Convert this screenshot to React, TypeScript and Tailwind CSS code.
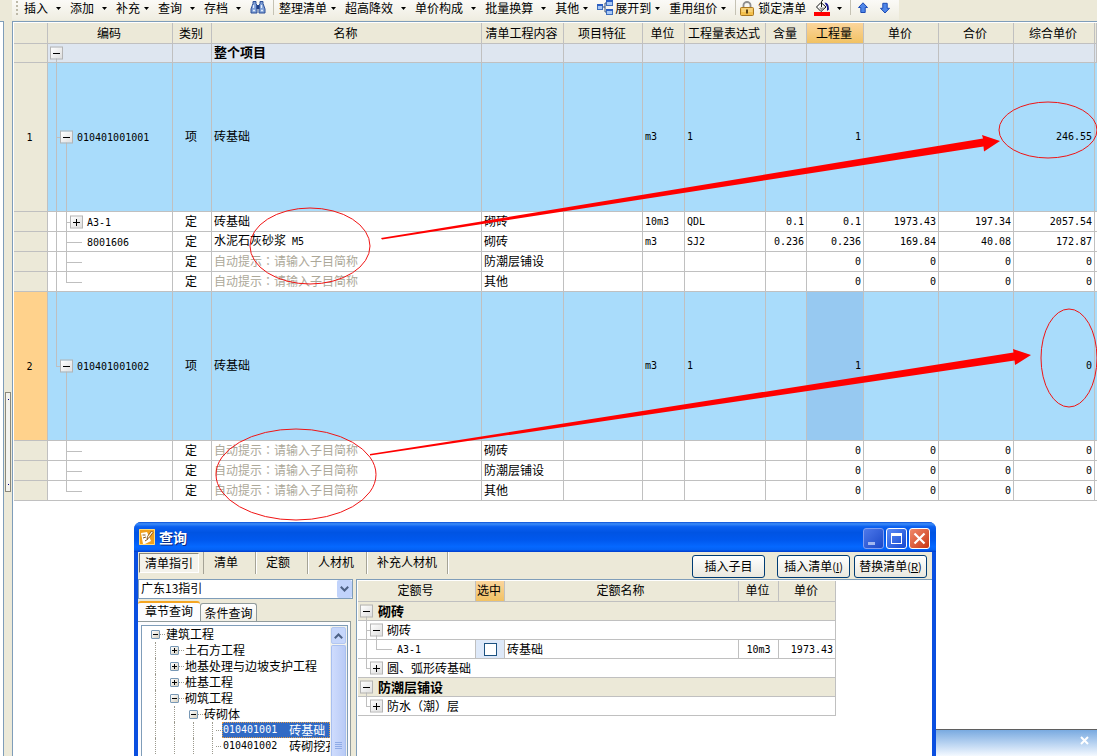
import { Fragment } from 'react';
import type { ReactNode } from 'react';
import clsx from 'clsx';

type GridRow = {
  no?: string;
  code?: string;
  kind: string;
  name?: string;
  content?: string;
  unit?: string;
  expr?: string;
  rate?: string;
  qty: string;
  price?: string;
  total?: string;
  full: string;
  item?: boolean;
  selected?: boolean;
  last?: boolean;
  toggle?: 'plus' | 'minus';
  lastItem?: boolean;
};

const HINT = '自动提示：请输入子目简称';

const rows: GridRow[] = [
  { no: '1', code: '010401001001', kind: '项', name: '砖基础', unit: 'm3', expr: '1', qty: '1', full: '246.55', item: true, toggle: 'minus' },
  { code: 'A3-1', kind: '定', name: '砖基础', content: '砌砖', unit: '10m3', expr: 'QDL', rate: '0.1', qty: '0.1', price: '1973.43', total: '197.34', full: '2057.54', toggle: 'plus' },
  { code: '8001606', kind: '定', name: '水泥石灰砂浆 M5', content: '砌砖', unit: 'm3', expr: 'SJ2', rate: '0.236', qty: '0.236', price: '169.84', total: '40.08', full: '172.87' },
  { kind: '定', content: '防潮层铺设', qty: '0', price: '0', total: '0', full: '0' },
  { kind: '定', content: '其他', qty: '0', price: '0', total: '0', full: '0', last: true },
  { no: '2', code: '010401001002', kind: '项', name: '砖基础', unit: 'm3', expr: '1', qty: '1', full: '0', item: true, selected: true, lastItem: true, toggle: 'minus' },
  { kind: '定', content: '砌砖', qty: '0', price: '0', total: '0', full: '0', lastItem: true },
  { kind: '定', content: '防潮层铺设', qty: '0', price: '0', total: '0', full: '0', lastItem: true },
  { kind: '定', content: '其他', qty: '0', price: '0', total: '0', full: '0', last: true, lastItem: true },
];

const columns = ['', '编码', '类别', '名称', '清单工程内容', '项目特征', '单位', '工程量表达式', '含量', '工程量', '单价', '合价', '综合单价', ''];

const menus = [
  { label: '插入', wide: true },
  { label: '添加', wide: true },
  { label: '补充', wide: false },
  { label: '查询', wide: true },
  { label: '存档', wide: true },
];

const actions = [
  { label: '整理清单', wide: false },
  { label: '超高降效', wide: true },
  { label: '单价构成', wide: true },
  { label: '批量换算', wide: true },
  { label: '其他', wide: false },
];

const tree = [
  { level: 0, label: '建筑工程', open: true },
  { level: 1, label: '土石方工程', open: false },
  { level: 1, label: '地基处理与边坡支护工程', open: false },
  { level: 1, label: '桩基工程', open: false },
  { level: 1, label: '砌筑工程', open: true },
  { level: 2, label: '砖砌体', open: true },
  { level: 3, code: '010401001', label: '砖基础', selected: true },
  { level: 3, code: '010401002', label: '砖砌挖孔' },
];

// Latin runs are set in the narrow mono face, Chinese in the UI face,
// full-width punctuation in the TC face so that it sits mid-cell
function Text({ value }: { value?: string }) {
  if (!value) return null;
  return (
    <>
      {value.split(/( ?[\x21-\x7e]+|[：（）])/).map((part, i) => {
        if (i % 2 === 0) return <Fragment key={i}>{part}</Fragment>;
        return /[：（）]/.test(part) ? (
          <span key={i} lang="zh-TW" className="font-['Noto_Sans_CJK_TC',sans-serif]">{part}</span>
        ) : (
          <span key={i} className="font-['DejaVu_Sans_Mono',monospace] text-[10px]">{part}</span>
        );
      })}
    </>
  );
}

function Caret() {
  return (
    <svg width="5" height="3" viewBox="0 0 5 3" className="shrink-0">
      <path d="M0 0h5L2.500 3z" fill="#000" />
    </svg>
  );
}

function MenuButton({ label, wide }: { label: string; wide: boolean }) {
  return (
    <button className={clsx('flex items-center shrink-0 h-4 pr-[9px] whitespace-nowrap', wide ? 'gap-2' : 'gap-1')}>
      {label}
      <Caret />
    </button>
  );
}

function Separator() {
  return <span className="w-px h-[15px] bg-[#c5c2b4] shrink-0" />;
}

function Toggle({ kind, className }: { kind: 'plus' | 'minus'; className: string }) {
  return (
    <button
      aria-label={kind === 'plus' ? '展开' : '折叠'}
      className={clsx('absolute top-1/2 -translate-y-1/2 size-[13px] border border-[#b4b4b4] bg-linear-to-br from-white to-[#dedede]', className)}
    >
      <svg width="11" height="11" viewBox="0 0 11 11" className="block" shapeRendering="crispEdges">
        <path d={kind === 'plus' ? 'M2 5h7v1H2zM5 2h1v7H5z' : 'M2 5h7v1H2z'} fill="#000" />
      </svg>
    </button>
  );
}

function CodeCell({ row }: { row: GridRow }) {
  const line = 'absolute bg-[#bfbfbf]';
  return (
    <td className={clsx('relative border-r border-b border-[#c0c0c0]', row.item ? 'pl-[29px]' : 'pl-[39px]')}>
      {row.item ? (
        <>
          <span className={clsx(line, 'left-2 top-0 w-px', row.lastItem ? 'h-1/2' : 'h-full')} />
          <span className={clsx(line, 'left-2 top-1/2 w-1 h-px')} />
          <span className={clsx(line, 'left-[18px] top-1/2 bottom-0 w-px')} />
          <Toggle kind="minus" className="left-3" />
        </>
      ) : (
        <>
          {!row.lastItem && <span className={clsx(line, 'left-2 top-0 w-px h-full')} />}
          <span className={clsx(line, 'left-[18px] top-0 w-px', row.last ? 'h-1/2' : 'h-full')} />
          <span className={clsx(line, 'left-[18px] top-1/2 w-4 h-px')} />
          {row.toggle && <Toggle kind={row.toggle} className="left-[22px]" />}
        </>
      )}
      <Text value={row.code} />
    </td>
  );
}

function QuotaGrid() {
  const line = 'border-r border-b border-[#c0c0c0]';
  const cell = clsx(line, 'pb-0.5');
  return (
    <table className="w-full table-fixed border-separate border-spacing-0 leading-[14px] whitespace-nowrap">
      <colgroup>
        <col className="w-[34px]" />
        <col className="w-[125px]" />
        <col className="w-[39px]" />
        <col />
        <col className="w-[82px]" />
        <col className="w-[79px]" />
        <col className="w-[42px]" />
        <col className="w-[81px]" />
        <col className="w-[41px]" />
        <col className="w-[57px]" />
        <col className="w-[75px]" />
        <col className="w-[75px]" />
        <col className="w-[81px]" />
        <col className="w-[2px]" />
      </colgroup>
      <thead>
        <tr className="h-[21px] bg-[#ece9d8]">
          {columns.map((c, i) => (
            <th key={i} className={clsx(line, 'pr-0.5 font-normal', c === '工程量' && 'bg-linear-to-b from-[#fbd59b] to-[#f1c263]')}>
              {c}
            </th>
          ))}
        </tr>
      </thead>
      <tbody>
        <tr className="h-[19px] bg-[#dee6f0]">
          <td className={clsx(cell, 'bg-[#ece9d8]')} />
          <td className={clsx(line, 'relative')}>
            <span className="absolute left-2 top-1/2 bottom-0 w-px bg-[#bfbfbf]" />
            <Toggle kind="minus" className="left-0.5" />
          </td>
          <td className={cell} />
          <td className={clsx(cell, 'pl-0.5 text-[13px] font-bold')}>整个项目</td>
          {columns.slice(4).map((_, i) => (
            <td key={i} className={cell} />
          ))}
        </tr>
        {rows.map((row, i) => (
          <tr key={i} className={row.item ? 'h-[149px] bg-[#a9dcfb]' : 'h-5 bg-white'}>
            <td className={clsx(line, 'pr-0.5 text-center', row.selected ? 'bg-[#ffd28c]' : 'bg-[#ece9d8]')}>
              <Text value={row.no} />
            </td>
            <CodeCell row={row} />
            <td className={clsx(cell, 'pr-0.5 text-center')}>{row.kind}</td>
            <td className={clsx(cell, 'pl-0.5', !row.name && 'text-[#aca899]')}>
              <Text value={row.name ?? HINT} />
            </td>
            <td className={clsx(cell, 'pl-0.5')}>{row.content}</td>
            <td className={cell} />
            <td className={clsx(cell, 'pl-0.5')}><Text value={row.unit} /></td>
            <td className={clsx(cell, 'pl-0.5')}><Text value={row.expr} /></td>
            <td className={clsx(cell, 'pr-0.5 text-right')}><Text value={row.rate} /></td>
            <td className={clsx(cell, 'pr-0.5 text-right', row.selected && 'bg-[#97c9f1]')}><Text value={row.qty} /></td>
            <td className={clsx(cell, 'pr-0.5 text-right')}><Text value={row.price} /></td>
            <td className={clsx(cell, 'pr-0.5 text-right')}><Text value={row.total} /></td>
            <td className={clsx(cell, 'pr-0.5 text-right')}><Text value={row.full} /></td>
            <td className="border-b border-[#c0c0c0]" />
          </tr>
        ))}
      </tbody>
    </table>
  );
}

function Toolbar() {
  return (
    <div className="h-[21px] flex bg-[#ece9d8]">
      <div className="h-5 ml-3 pl-1 pr-2 flex items-start bg-linear-to-b from-[#fbfaf7] to-[#efede1] leading-4">
        <svg width="2" height="15" viewBox="0 0 2 15" className="mr-1.5 shrink-0">
          <path d="M0 1h2v2H0zM0 5h2v2H0zM0 9h2v2H0zM0 13h2v2H0z" fill="#bdb9a8" />
        </svg>
        {menus.map((m) => <MenuButton key={m.label} {...m} />)}
        <button aria-label="查找" className="w-4 h-4 mr-[7px] shrink-0">
          <svg width="16" height="16" viewBox="0 0 16 16">
            <path d="M3 1.500h3v2l1 2v7.500H1V9l2-5.500z" fill="#7f9fd6" stroke="#2c4f96" />
            <path d="M10 1.500h3v2L15 9v4H9V5.500l1-2z" fill="#7f9fd6" stroke="#2c4f96" />
            <path d="M6.500 5h3v4h-3z" fill="#1f3f86" />
            <path d="M3.500 5v3M11.500 5v3M3 10.500h2M11 10.500h2" stroke="#e4eefc" strokeWidth="1.300" />
          </svg>
        </button>
        <Separator />
        <span className="w-[5px] shrink-0" />
        {actions.map((m) => <MenuButton key={m.label} {...m} />)}
        <svg width="16" height="16" viewBox="0 0 16 16" className="mr-0.5 shrink-0">
          <path d="M5 7h3M8 3v9M8 3h2M8 12h2" stroke="#34507e" fill="none" />
          <rect x="0.500" y="4.500" width="5" height="5" fill="#a9c8f5" stroke="#3f6fbd" />
          <rect x="9.500" y="0.500" width="6" height="5" fill="#a9c8f5" stroke="#3f6fbd" />
          <rect x="9.500" y="9.500" width="6" height="5" fill="#a9c8f5" stroke="#3f6fbd" />
          <path d="M0 5h6M9 1h7M9 10h7" stroke="#2b5ec2" strokeWidth="2" />
        </svg>
        <MenuButton label="展开到" wide={false} />
        <MenuButton label="重用组价" wide={false} />
        <Separator />
        <button className="flex items-center h-4 pl-1 pr-2 gap-1 shrink-0 whitespace-nowrap">
          <svg width="14" height="15" viewBox="0 0 14 15">
            <path d="M3.500 7V4a3.500 3 0 0 1 7 0v3" fill="none" stroke="#8f8f8f" strokeWidth="1.800" />
            <rect x="0.500" y="6.500" width="13" height="8" rx="1" fill="#f3c04d" stroke="#a97721" />
            <path d="M1.500 8h11M1.500 10h11" stroke="#fbe3a3" />
            <path d="M6 8.500h2v4H6z" fill="#5e4212" />
          </svg>
          锁定清单
        </button>
        <button aria-label="填充颜色" className="flex items-center h-4 gap-[7px] mr-2 shrink-0">
          <svg width="16" height="16" viewBox="0 0 16 16">
            <path d="M7 2.500 12 7l-5 4.500L2.500 7z" fill="#fff" stroke="#111" />
            <path d="M5 7.500h6L7.500 11z" fill="#9a9a9a" />
            <path d="M7.500 7V1.500Q7.500 .5 9 .5" fill="none" stroke="#111" />
            <path d="M10.500 2.500q4.500 0 4.500 7l-2 1.500V7z" fill="#14148c" />
            <path d="M0 12h16v4H0z" fill="#f00" />
          </svg>
          <Caret />
        </button>
        <Separator />
        <button aria-label="上移" className="ml-1.5 mt-0.5 size-3 shrink-0">
          <svg width="12" height="12" viewBox="0 0 12 12">
            <path d="M6 .8 10.500 5.500H8.200V10.500H3.800V5.500H1.500z" fill="#4f86e8" stroke="#1d4bb4" />
          </svg>
        </button>
        <button aria-label="下移" className="ml-2.5 mt-0.5 size-3 shrink-0">
          <svg width="12" height="12" viewBox="0 0 12 12">
            <path d="M6 11 1.500 6.300h2.300V1.300h4.400v5h2.300z" fill="#4f86e8" stroke="#1d4bb4" />
          </svg>
        </button>
      </div>
    </div>
  );
}

function Annotations() {
  return (
    <svg width="1097" height="530" viewBox="0 0 1097 530" className="absolute left-0 top-0 pointer-events-none">
      <g fill="none" stroke="#f01414">
        <ellipse cx="310" cy="246" rx="60" ry="38" />
        <ellipse cx="1048" cy="130" rx="49" ry="28" />
        <ellipse cx="1069" cy="358" rx="28" ry="49" />
        <ellipse cx="296" cy="474.500" rx="80" ry="45.500" />
      </g>
      <g fill="#ff0000">
        <path d="M381 238 983 138.500 982 135 1000 141 984 151.500 983.500 146.500 382 239.500z" />
        <path d="M370 454 1013.500 352.500 1013 349 1031 355 1015 365 1014.500 360.500 370 455.500z" />
      </g>
    </svg>
  );
}

function TitleButton({ label, className, children }: { label: string; className: string; children: ReactNode }) {
  return (
    <button aria-label={label} className={clsx('size-[21px] rounded-[3px] border', className)}>
      <svg width="19" height="19" viewBox="0 0 19 19">{children}</svg>
    </button>
  );
}

function ActionButton({ label, hotkey }: { label: string; hotkey?: string }) {
  return (
    <button className="w-[73px] h-[23px] pb-0.5 rounded-[3px] border border-[#003c74] bg-linear-to-b from-white to-[#eae8df] leading-4 whitespace-nowrap">
      {label}
      {hotkey && <span className="text-[11px]">(<u>{hotkey}</u>)</span>}
    </button>
  );
}

function ChapterTree() {
  return (
    <div className="flex flex-1 ml-[3px] mr-[2px] mt-[3px] border border-b-0 border-[#7f9db9] bg-white overflow-hidden">
      <ul className="flex-1 min-w-0 overflow-hidden">
        {tree.map((n, i) => (
          <li key={i} className="flex h-4 pl-[13px] leading-4 whitespace-nowrap">
            {Array.from({ length: n.level }, (_, g) => (
              <span key={g} className="w-[19px] shrink-0 border-l border-dotted border-[#9c9a8e]" />
            ))}
            {n.open !== undefined ? (
              <button aria-label={n.label} className="-ml-1 self-center size-[9px] shrink-0 rounded-[1px] border border-[#7898b5] bg-linear-to-br from-white to-[#d5cfc0]">
                <svg width="7" height="7" viewBox="0 0 7 7" className="block" shapeRendering="crispEdges">
                  <path d={n.open ? 'M1 3h5v1H1z' : 'M1 3h5v1H1zM3 1h1v5H3z'} fill="#000" />
                </svg>
              </button>
            ) : (
              <span className="w-1 shrink-0 border-l border-dotted border-[#9c9a8e]" />
            )}
            <span className="w-[5px] mr-px self-center shrink-0 border-t border-dotted border-[#9c9a8e]" />
            {n.code ? (
              <span className={clsx('flex flex-1 pl-px gap-3', n.selected && 'bg-[#316ac5] text-white outline-1 -outline-offset-1 outline-dotted outline-[#e39b45]')}>
                <Text value={n.code} />
                <span>{n.label}</span>
              </span>
            ) : (
              n.label
            )}
          </li>
        ))}
      </ul>
      <div className="w-[17px] shrink-0 px-px flex flex-col gap-px bg-[#f3f3ee]">
        <button aria-label="向上滚动" className="h-[17px] mt-px rounded-[2px] border border-[#b3c7f0] bg-[#c6d6fb] flex items-center justify-center">
          <svg width="9" height="6" viewBox="0 0 9 6">
            <path d="M.8 5.200 4.500 1.500l3.700 3.700" fill="none" stroke="#4d6185" strokeWidth="2" />
          </svg>
        </button>
        <div className="flex-1 rounded-t-[2px] border border-b-0 border-[#a9c0f0] bg-linear-to-r from-[#cfdcfd] to-[#b9cbf6] flex justify-center items-end pb-1.5">
          <svg width="7" height="8" viewBox="0 0 7 8">
            <path d="M0 .5h7M0 2.500h7M0 4.500h7M0 6.500h7" stroke="#8fabe6" />
          </svg>
        </div>
      </div>
    </div>
  );
}

function QuotaTable() {
  const cell = 'border-r border-b border-[#c0c0c0]';
  const span = clsx(cell, 'relative');
  const line = 'absolute bg-[#bfbfbf]';
  return (
    <table className="w-[478px] table-fixed border-separate border-spacing-0 leading-4 whitespace-nowrap">
      <colgroup>
        <col className="w-[118px]" />
        <col className="w-[29px]" />
        <col />
        <col className="w-[40px]" />
        <col className="w-[57px]" />
      </colgroup>
      <thead>
        <tr className="h-[21px] bg-[#ece9d8]">
          <th className={clsx(cell, 'pr-0.5 pb-0.5 font-normal')}>定额号</th>
          <th className={clsx(cell, 'pr-0.5 pb-0.5 font-normal bg-linear-to-b from-[#fbd59b] to-[#f1c263]')}>选中</th>
          <th className={clsx(cell, 'pr-0.5 pb-0.5 font-normal')}>定额名称</th>
          <th className={clsx(cell, 'pr-0.5 pb-0.5 font-normal')}>单位</th>
          <th className={clsx(cell, 'pr-0.5 pb-0.5 font-normal')}>单价</th>
        </tr>
      </thead>
      <tbody>
        <tr className="h-[19px] bg-[#ece9d8]">
          <td colSpan={5} className={clsx(span, 'pl-5 text-[13px] font-bold')}>
            <span className={clsx(line, 'left-2 top-1/2 bottom-0 w-px')} />
            <Toggle kind="minus" className="left-0.5" />
            砌砖
          </td>
        </tr>
        <tr className="h-[19px]">
          <td colSpan={5} className={clsx(span, 'pl-[29px]')}>
            <span className={clsx(line, 'left-2 top-0 bottom-0 w-px')} />
            <span className={clsx(line, 'left-2 top-1/2 w-1 h-px')} />
            <span className={clsx(line, 'left-[18px] top-1/2 bottom-0 w-px')} />
            <Toggle kind="minus" className="left-3" />
            砌砖
          </td>
        </tr>
        <tr className="h-[19px]">
          <td className={clsx(span, 'pl-[39px]')}>
            <span className={clsx(line, 'left-2 top-0 bottom-0 w-px')} />
            <span className={clsx(line, 'left-[18px] top-0 h-1/2 w-px')} />
            <span className={clsx(line, 'left-[18px] top-1/2 w-4 h-px')} />
            <Text value="A3-1" />
          </td>
          <td className={clsx(cell, 'bg-[#dee9f9]')}>
            <input type="checkbox" aria-label="选中 A3-1" className="block mx-auto size-[13px] appearance-none border border-[#1c5180] bg-white" />
          </td>
          <td className={clsx(cell, 'pl-0.5')}>砖基础</td>
          <td className={clsx(cell, 'text-center')}><Text value="10m3" /></td>
          <td className={clsx(cell, 'pr-0.5 text-right')}><Text value="1973.43" /></td>
        </tr>
        <tr className="h-[19px]">
          <td colSpan={5} className={clsx(span, 'pl-[29px]')}>
            <span className={clsx(line, 'left-2 top-0 h-1/2 w-px')} />
            <span className={clsx(line, 'left-2 top-1/2 w-1 h-px')} />
            <Toggle kind="plus" className="left-3" />
            圆、弧形砖基础
          </td>
        </tr>
        <tr className="h-[19px] bg-[#ece9d8]">
          <td colSpan={5} className={clsx(span, 'pl-5 text-[13px] font-bold')}>
            <span className={clsx(line, 'left-2 top-1/2 bottom-0 w-px')} />
            <Toggle kind="minus" className="left-0.5" />
            防潮层铺设
          </td>
        </tr>
        <tr className="h-[19px]">
          <td colSpan={5} className={clsx(span, 'pl-[29px]')}>
            <span className={clsx(line, 'left-2 top-0 h-1/2 w-px')} />
            <span className={clsx(line, 'left-2 top-1/2 w-1 h-px')} />
            <Toggle kind="plus" className="left-3" />
            <Text value="防水（潮）层" />
          </td>
        </tr>
      </tbody>
    </table>
  );
}

function QueryDialog() {
  const tab = 'h-[22px] pl-2.5 pb-0.5 text-left border-r border-[#a5a396] shadow-[1px_0_0_#fff]';
  return (
    <section className="absolute left-[134px] top-[522px] bottom-0 w-[802px] flex flex-col rounded-t-[7px] bg-[#0a4fe0] overflow-hidden">
      <header className="h-[30px] shrink-0 pl-[5px] pr-1.5 flex items-center bg-[linear-gradient(to_bottom,#0a4fd6_0%,#3c8cf8_6%,#0a5ff0_16%,#0054e3_35%,#0058ee_60%,#0568ff_82%,#0462f5_92%,#003bcb_100%)]">
        <svg width="16" height="16" viewBox="0 0 16 16" className="mr-1">
          <rect width="16" height="16" fill="#f0a01c" />
          <path d="M.5 .5h15v15H.5z" fill="none" stroke="#ffdc7a" />
          <path d="M2 4 8 3l4 9-6 3H4z" fill="#fff" />
          <path d="M3.500 6h3M4 9l3-1M6 12l3-2" stroke="#8a5a1a" />
          <path d="M12.500 2 8.500 7.500l-.5 2.500 2-1.200L14 3.500z" fill="#fff3cf" stroke="#7a4310" strokeWidth=".8" />
        </svg>
        <h2 className="flex-1 text-sm font-bold text-white [text-shadow:1px_1px_#0a2a80]">查询</h2>
        <div className="flex gap-0.5 mt-0.5">
          <TitleButton label="最小化" className="border-[#7f9df0] bg-linear-to-br from-[#4d78ea] to-[#1b48c8]">
            <path d="M4 13h7v3H4z" fill="#a3b8f0" />
          </TitleButton>
          <TitleButton label="最大化" className="border-white bg-linear-to-br from-[#5c8bf7] to-[#1546cf]">
            <path d="M4 4h11v11H4zM5 7v7h9V7z" fill="#fff" fillRule="evenodd" />
          </TitleButton>
          <TitleButton label="关闭" className="border-white bg-linear-to-br from-[#f0896a] to-[#c8320a]">
            <path d="M4.500 4.500l10 10M14.500 4.500l-10 10" stroke="#fff" strokeWidth="2.200" />
          </TitleButton>
        </div>
      </header>

      <div className="flex-1 min-h-0 mx-1 flex flex-col bg-[#ece9d8]">
        <div className="h-[27px] shrink-0 flex items-start pr-[5px]">
          <div className="w-[66px] pl-px pt-px border-r border-[#a5a396] h-[22px]">
            <button className="w-[60px] h-5 leading-4 border border-[#8a887b] border-r-white border-b-white border-l-[#716f64] bg-[#f4f3ec]">清单指引</button>
          </div>
          <button className={clsx(tab, 'w-[52px]')}>清单</button>
          <button className={clsx(tab, 'w-[52px]')}>定额</button>
          <button className={clsx(tab, 'w-[59px]')}>人材机</button>
          <button className={clsx(tab, 'w-[81px]')}>补充人材机</button>
          <div className="flex-1 flex justify-end gap-1 pt-[3px]">
            <ActionButton label="插入子目" />
            <span className="w-1" />
            <ActionButton label="插入清单" hotkey="I" />
            <ActionButton label="替换清单" hotkey="R" />
          </div>
        </div>

        <div className="flex-1 min-h-0 flex">
          <div className="w-[218px] shrink-0 flex flex-col">
            <div className="relative w-[215px] h-5">
              <select aria-label="指引" className="block w-full h-5 pl-0.5 pb-0.5 appearance-none border border-[#7f9db9] bg-white leading-4">
                <option>广东13指引</option>
              </select>
              <span className="absolute right-px top-px w-[15px] h-[18px] rounded-[2px] bg-[#c1d3fb] flex items-center justify-center pointer-events-none">
                <svg width="9" height="6" viewBox="0 0 9 6">
                  <path d="M.8 .8 4.500 4.500 8.200 .8" fill="none" stroke="#4d6185" strokeWidth="2" />
                </svg>
              </span>
            </div>
            <div className="flex items-end h-[22px] pt-0.5">
              <button className="w-[62px] h-5 pb-0.5 leading-4 rounded-t-[3px] border-t-2 border-[#f5a623] bg-[#fcfcfe]">章节查询</button>
              <button className="w-[57px] h-[18px] leading-4 rounded-t-[3px] border border-b-0 border-[#919b9c] bg-linear-to-b from-white to-[#f0efe6]">条件查询</button>
            </div>
            <div className="flex-1 min-h-0 w-[213px] flex flex-col border-r border-t border-[#919b9c] bg-[#fcfcfe]">
              <ChapterTree />
            </div>
          </div>
          <div className="flex-1 border-l border-t border-[#7f9db9] bg-white pl-px pt-px">
            <QuotaTable />
          </div>
        </div>
      </div>
    </section>
  );
}

export default function App() {
  return (
    <div className="relative min-h-screen flex flex-col overflow-hidden bg-white text-black text-xs font-['Noto_Sans_CJK_SC',sans-serif]">
      <Toolbar />
      <main className="flex-1 flex">
        <div className="w-1 shrink-0 border-t border-r border-[#7f9db9] bg-white" />
        <div className="w-2 shrink-0 bg-[#ece9d8]">
          <div className="mt-[371px] ml-px w-1.5 h-[100px] py-1.5 flex flex-col items-center justify-between border border-[#8a887b] bg-[#f4f3ee]">
            <span className="size-px bg-[#00007f]" />
            <span className="size-px bg-[#00007f]" />
          </div>
        </div>
        <div className="flex-1 min-w-0 border-t border-l border-[#7f9db9] pl-px pt-px">
          <QuotaGrid />
        </div>
      </main>

      <aside className="absolute left-[936px] right-0 bottom-0 h-[27px] pr-2 flex items-center justify-end border-t border-[#5f5f5f] bg-linear-to-b from-[#79aae0] to-[#f4f9ff]">
        <button aria-label="关闭提示" className="mb-1.5 size-[9px]">
          <svg width="9" height="9" viewBox="0 0 9 9">
            <path d="M1 1l7 7M8 1 1 8" stroke="#fff" strokeWidth="2" />
          </svg>
        </button>
      </aside>
      <QueryDialog />
      <Annotations />
    </div>
  );
}
